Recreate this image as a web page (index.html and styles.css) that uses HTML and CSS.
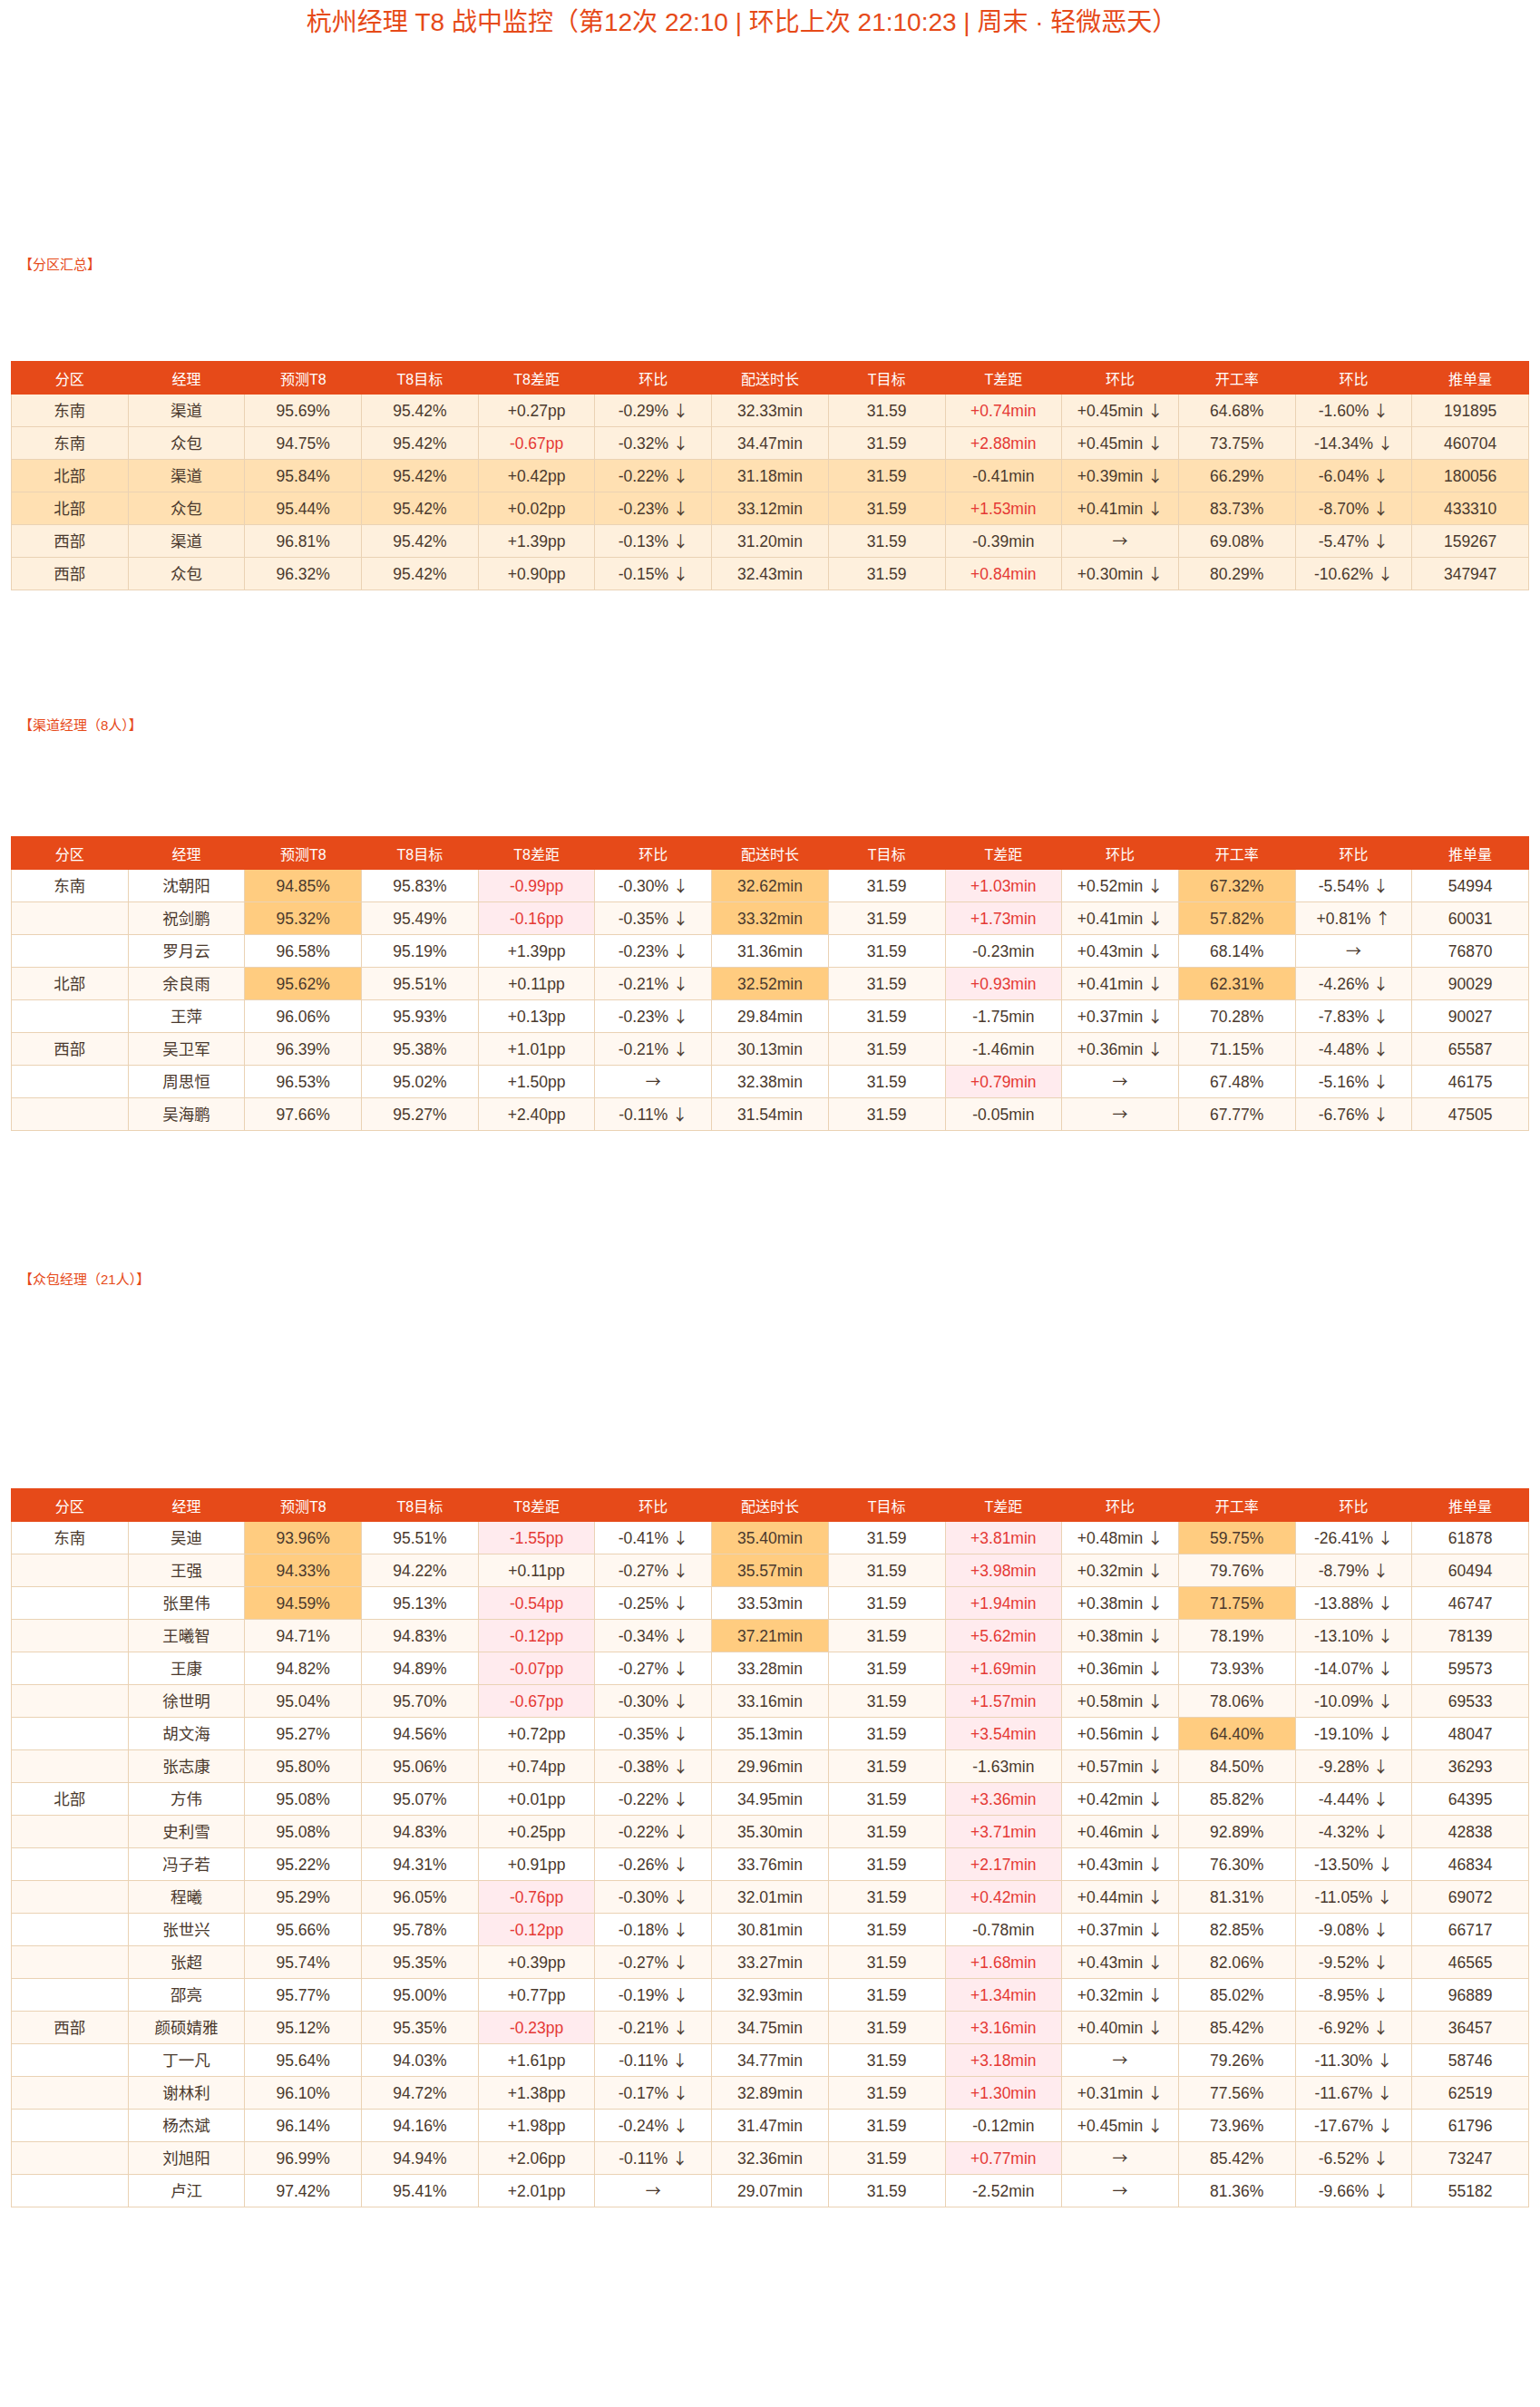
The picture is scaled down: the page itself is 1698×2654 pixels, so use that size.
FILE: index.html
```html
<!DOCTYPE html>
<html lang="zh-CN">
<head>
<meta charset="utf-8">
<title>杭州经理 T8 战中监控</title>
<link rel="stylesheet" href="styles.css">
</head>
<body>
<h1 class="title">杭州经理 T8 战中监控（第12次 22:10 | 环比上次 21:10:23 | 周末 · 轻微恶天）</h1>

<div class="label label-summary">【分区汇总】</div>
<table class="grid grid-summary">
<thead><tr><th>分区</th><th>经理</th><th>预测T8</th><th>T8目标</th><th>T8差距</th><th>环比</th><th>配送时长</th><th>T目标</th><th>T差距</th><th>环比</th><th>开工率</th><th>环比</th><th>推单量</th></tr></thead>
<tbody>
<tr class="r-base"><td>东南</td><td>渠道</td><td>95.69%</td><td>95.42%</td><td>+0.27pp</td><td>-0.29% <span class="arr">↓</span></td><td>32.33min</td><td>31.59</td><td class="red">+0.74min</td><td>+0.45min <span class="arr">↓</span></td><td>64.68%</td><td>-1.60% <span class="arr">↓</span></td><td>191895</td></tr>
<tr class="r-base"><td>东南</td><td>众包</td><td>94.75%</td><td>95.42%</td><td class="red">-0.67pp</td><td>-0.32% <span class="arr">↓</span></td><td>34.47min</td><td>31.59</td><td class="red">+2.88min</td><td>+0.45min <span class="arr">↓</span></td><td>73.75%</td><td>-14.34% <span class="arr">↓</span></td><td>460704</td></tr>
<tr class="r-north"><td>北部</td><td>渠道</td><td>95.84%</td><td>95.42%</td><td>+0.42pp</td><td>-0.22% <span class="arr">↓</span></td><td>31.18min</td><td>31.59</td><td>-0.41min</td><td>+0.39min <span class="arr">↓</span></td><td>66.29%</td><td>-6.04% <span class="arr">↓</span></td><td>180056</td></tr>
<tr class="r-north"><td>北部</td><td>众包</td><td>95.44%</td><td>95.42%</td><td>+0.02pp</td><td>-0.23% <span class="arr">↓</span></td><td>33.12min</td><td>31.59</td><td class="red">+1.53min</td><td>+0.41min <span class="arr">↓</span></td><td>83.73%</td><td>-8.70% <span class="arr">↓</span></td><td>433310</td></tr>
<tr class="r-base"><td>西部</td><td>渠道</td><td>96.81%</td><td>95.42%</td><td>+1.39pp</td><td>-0.13% <span class="arr">↓</span></td><td>31.20min</td><td>31.59</td><td>-0.39min</td><td><span class="arr">→</span></td><td>69.08%</td><td>-5.47% <span class="arr">↓</span></td><td>159267</td></tr>
<tr class="r-base"><td>西部</td><td>众包</td><td>96.32%</td><td>95.42%</td><td>+0.90pp</td><td>-0.15% <span class="arr">↓</span></td><td>32.43min</td><td>31.59</td><td class="red">+0.84min</td><td>+0.30min <span class="arr">↓</span></td><td>80.29%</td><td>-10.62% <span class="arr">↓</span></td><td>347947</td></tr>
</tbody>
</table>

<div class="label label-channel">【渠道经理（8人）】</div>
<table class="grid grid-people grid-channel">
<thead><tr><th>分区</th><th>经理</th><th>预测T8</th><th>T8目标</th><th>T8差距</th><th>环比</th><th>配送时长</th><th>T目标</th><th>T差距</th><th>环比</th><th>开工率</th><th>环比</th><th>推单量</th></tr></thead>
<tbody>
<tr><td>东南</td><td>沈朝阳</td><td class="hl">94.85%</td><td>95.83%</td><td class="neg">-0.99pp</td><td>-0.30% <span class="arr">↓</span></td><td class="hl">32.62min</td><td>31.59</td><td class="neg">+1.03min</td><td>+0.52min <span class="arr">↓</span></td><td class="hl">67.32%</td><td>-5.54% <span class="arr">↓</span></td><td>54994</td></tr>
<tr><td></td><td>祝剑鹏</td><td class="hl">95.32%</td><td>95.49%</td><td class="neg">-0.16pp</td><td>-0.35% <span class="arr">↓</span></td><td class="hl">33.32min</td><td>31.59</td><td class="neg">+1.73min</td><td>+0.41min <span class="arr">↓</span></td><td class="hl">57.82%</td><td>+0.81% <span class="arr">↑</span></td><td>60031</td></tr>
<tr><td></td><td>罗月云</td><td>96.58%</td><td>95.19%</td><td>+1.39pp</td><td>-0.23% <span class="arr">↓</span></td><td>31.36min</td><td>31.59</td><td>-0.23min</td><td>+0.43min <span class="arr">↓</span></td><td>68.14%</td><td><span class="arr">→</span></td><td>76870</td></tr>
<tr><td>北部</td><td>余良雨</td><td class="hl">95.62%</td><td>95.51%</td><td>+0.11pp</td><td>-0.21% <span class="arr">↓</span></td><td class="hl">32.52min</td><td>31.59</td><td class="neg">+0.93min</td><td>+0.41min <span class="arr">↓</span></td><td class="hl">62.31%</td><td>-4.26% <span class="arr">↓</span></td><td>90029</td></tr>
<tr><td></td><td>王萍</td><td>96.06%</td><td>95.93%</td><td>+0.13pp</td><td>-0.23% <span class="arr">↓</span></td><td>29.84min</td><td>31.59</td><td>-1.75min</td><td>+0.37min <span class="arr">↓</span></td><td>70.28%</td><td>-7.83% <span class="arr">↓</span></td><td>90027</td></tr>
<tr><td>西部</td><td>吴卫军</td><td>96.39%</td><td>95.38%</td><td>+1.01pp</td><td>-0.21% <span class="arr">↓</span></td><td>30.13min</td><td>31.59</td><td>-1.46min</td><td>+0.36min <span class="arr">↓</span></td><td>71.15%</td><td>-4.48% <span class="arr">↓</span></td><td>65587</td></tr>
<tr><td></td><td>周思恒</td><td>96.53%</td><td>95.02%</td><td>+1.50pp</td><td><span class="arr">→</span></td><td>32.38min</td><td>31.59</td><td class="neg">+0.79min</td><td><span class="arr">→</span></td><td>67.48%</td><td>-5.16% <span class="arr">↓</span></td><td>46175</td></tr>
<tr><td></td><td>吴海鹏</td><td>97.66%</td><td>95.27%</td><td>+2.40pp</td><td>-0.11% <span class="arr">↓</span></td><td>31.54min</td><td>31.59</td><td>-0.05min</td><td><span class="arr">→</span></td><td>67.77%</td><td>-6.76% <span class="arr">↓</span></td><td>47505</td></tr>
</tbody>
</table>

<div class="label label-crowd">【众包经理（21人）】</div>
<table class="grid grid-people grid-crowd">
<thead><tr><th>分区</th><th>经理</th><th>预测T8</th><th>T8目标</th><th>T8差距</th><th>环比</th><th>配送时长</th><th>T目标</th><th>T差距</th><th>环比</th><th>开工率</th><th>环比</th><th>推单量</th></tr></thead>
<tbody>
<tr><td>东南</td><td>吴迪</td><td class="hl">93.96%</td><td>95.51%</td><td class="neg">-1.55pp</td><td>-0.41% <span class="arr">↓</span></td><td class="hl">35.40min</td><td>31.59</td><td class="neg">+3.81min</td><td>+0.48min <span class="arr">↓</span></td><td class="hl">59.75%</td><td>-26.41% <span class="arr">↓</span></td><td>61878</td></tr>
<tr><td></td><td>王强</td><td class="hl">94.33%</td><td>94.22%</td><td>+0.11pp</td><td>-0.27% <span class="arr">↓</span></td><td class="hl">35.57min</td><td>31.59</td><td class="neg">+3.98min</td><td>+0.32min <span class="arr">↓</span></td><td>79.76%</td><td>-8.79% <span class="arr">↓</span></td><td>60494</td></tr>
<tr><td></td><td>张里伟</td><td class="hl">94.59%</td><td>95.13%</td><td class="neg">-0.54pp</td><td>-0.25% <span class="arr">↓</span></td><td>33.53min</td><td>31.59</td><td class="neg">+1.94min</td><td>+0.38min <span class="arr">↓</span></td><td class="hl">71.75%</td><td>-13.88% <span class="arr">↓</span></td><td>46747</td></tr>
<tr><td></td><td>王曦智</td><td>94.71%</td><td>94.83%</td><td class="neg">-0.12pp</td><td>-0.34% <span class="arr">↓</span></td><td class="hl">37.21min</td><td>31.59</td><td class="neg">+5.62min</td><td>+0.38min <span class="arr">↓</span></td><td>78.19%</td><td>-13.10% <span class="arr">↓</span></td><td>78139</td></tr>
<tr><td></td><td>王康</td><td>94.82%</td><td>94.89%</td><td class="neg">-0.07pp</td><td>-0.27% <span class="arr">↓</span></td><td>33.28min</td><td>31.59</td><td class="neg">+1.69min</td><td>+0.36min <span class="arr">↓</span></td><td>73.93%</td><td>-14.07% <span class="arr">↓</span></td><td>59573</td></tr>
<tr><td></td><td>徐世明</td><td>95.04%</td><td>95.70%</td><td class="neg">-0.67pp</td><td>-0.30% <span class="arr">↓</span></td><td>33.16min</td><td>31.59</td><td class="neg">+1.57min</td><td>+0.58min <span class="arr">↓</span></td><td>78.06%</td><td>-10.09% <span class="arr">↓</span></td><td>69533</td></tr>
<tr><td></td><td>胡文海</td><td>95.27%</td><td>94.56%</td><td>+0.72pp</td><td>-0.35% <span class="arr">↓</span></td><td>35.13min</td><td>31.59</td><td class="neg">+3.54min</td><td>+0.56min <span class="arr">↓</span></td><td class="hl">64.40%</td><td>-19.10% <span class="arr">↓</span></td><td>48047</td></tr>
<tr><td></td><td>张志康</td><td>95.80%</td><td>95.06%</td><td>+0.74pp</td><td>-0.38% <span class="arr">↓</span></td><td>29.96min</td><td>31.59</td><td>-1.63min</td><td>+0.57min <span class="arr">↓</span></td><td>84.50%</td><td>-9.28% <span class="arr">↓</span></td><td>36293</td></tr>
<tr><td>北部</td><td>方伟</td><td>95.08%</td><td>95.07%</td><td>+0.01pp</td><td>-0.22% <span class="arr">↓</span></td><td>34.95min</td><td>31.59</td><td class="neg">+3.36min</td><td>+0.42min <span class="arr">↓</span></td><td>85.82%</td><td>-4.44% <span class="arr">↓</span></td><td>64395</td></tr>
<tr><td></td><td>史利雪</td><td>95.08%</td><td>94.83%</td><td>+0.25pp</td><td>-0.22% <span class="arr">↓</span></td><td>35.30min</td><td>31.59</td><td class="neg">+3.71min</td><td>+0.46min <span class="arr">↓</span></td><td>92.89%</td><td>-4.32% <span class="arr">↓</span></td><td>42838</td></tr>
<tr><td></td><td>冯子若</td><td>95.22%</td><td>94.31%</td><td>+0.91pp</td><td>-0.26% <span class="arr">↓</span></td><td>33.76min</td><td>31.59</td><td class="neg">+2.17min</td><td>+0.43min <span class="arr">↓</span></td><td>76.30%</td><td>-13.50% <span class="arr">↓</span></td><td>46834</td></tr>
<tr><td></td><td>程曦</td><td>95.29%</td><td>96.05%</td><td class="neg">-0.76pp</td><td>-0.30% <span class="arr">↓</span></td><td>32.01min</td><td>31.59</td><td class="neg">+0.42min</td><td>+0.44min <span class="arr">↓</span></td><td>81.31%</td><td>-11.05% <span class="arr">↓</span></td><td>69072</td></tr>
<tr><td></td><td>张世兴</td><td>95.66%</td><td>95.78%</td><td class="neg">-0.12pp</td><td>-0.18% <span class="arr">↓</span></td><td>30.81min</td><td>31.59</td><td>-0.78min</td><td>+0.37min <span class="arr">↓</span></td><td>82.85%</td><td>-9.08% <span class="arr">↓</span></td><td>66717</td></tr>
<tr><td></td><td>张超</td><td>95.74%</td><td>95.35%</td><td>+0.39pp</td><td>-0.27% <span class="arr">↓</span></td><td>33.27min</td><td>31.59</td><td class="neg">+1.68min</td><td>+0.43min <span class="arr">↓</span></td><td>82.06%</td><td>-9.52% <span class="arr">↓</span></td><td>46565</td></tr>
<tr><td></td><td>邵亮</td><td>95.77%</td><td>95.00%</td><td>+0.77pp</td><td>-0.19% <span class="arr">↓</span></td><td>32.93min</td><td>31.59</td><td class="neg">+1.34min</td><td>+0.32min <span class="arr">↓</span></td><td>85.02%</td><td>-8.95% <span class="arr">↓</span></td><td>96889</td></tr>
<tr><td>西部</td><td>颜硕婧雅</td><td>95.12%</td><td>95.35%</td><td class="neg">-0.23pp</td><td>-0.21% <span class="arr">↓</span></td><td>34.75min</td><td>31.59</td><td class="neg">+3.16min</td><td>+0.40min <span class="arr">↓</span></td><td>85.42%</td><td>-6.92% <span class="arr">↓</span></td><td>36457</td></tr>
<tr><td></td><td>丁一凡</td><td>95.64%</td><td>94.03%</td><td>+1.61pp</td><td>-0.11% <span class="arr">↓</span></td><td>34.77min</td><td>31.59</td><td class="neg">+3.18min</td><td><span class="arr">→</span></td><td>79.26%</td><td>-11.30% <span class="arr">↓</span></td><td>58746</td></tr>
<tr><td></td><td>谢林利</td><td>96.10%</td><td>94.72%</td><td>+1.38pp</td><td>-0.17% <span class="arr">↓</span></td><td>32.89min</td><td>31.59</td><td class="neg">+1.30min</td><td>+0.31min <span class="arr">↓</span></td><td>77.56%</td><td>-11.67% <span class="arr">↓</span></td><td>62519</td></tr>
<tr><td></td><td>杨杰斌</td><td>96.14%</td><td>94.16%</td><td>+1.98pp</td><td>-0.24% <span class="arr">↓</span></td><td>31.47min</td><td>31.59</td><td>-0.12min</td><td>+0.45min <span class="arr">↓</span></td><td>73.96%</td><td>-17.67% <span class="arr">↓</span></td><td>61796</td></tr>
<tr><td></td><td>刘旭阳</td><td>96.99%</td><td>94.94%</td><td>+2.06pp</td><td>-0.11% <span class="arr">↓</span></td><td>32.36min</td><td>31.59</td><td class="neg">+0.77min</td><td><span class="arr">→</span></td><td>85.42%</td><td>-6.52% <span class="arr">↓</span></td><td>73247</td></tr>
<tr><td></td><td>卢江</td><td>97.42%</td><td>95.41%</td><td>+2.01pp</td><td><span class="arr">→</span></td><td>29.07min</td><td>31.59</td><td>-2.52min</td><td><span class="arr">→</span></td><td>81.36%</td><td>-9.66% <span class="arr">↓</span></td><td>55182</td></tr>
</tbody>
</table>
</body>
</html>
```

FILE: styles.css
```css
* {
  box-sizing: border-box;
}

body {
  margin: 0;
  padding: 0 12px 200px;
  background: #ffffff;
  color: #4a392d;
  font-family: "Liberation Sans", "Noto Sans CJK SC", sans-serif;
}

.title {
  margin: 0;
  height: 50px;
  line-height: 50px;
  padding-right: 62px;
  text-align: center;
  font-size: 28px;
  font-weight: 400;
  color: #e64a19;
}

.label {
  margin: 0;
  padding-left: 9px;
  font-size: 15px;
  line-height: 20px;
  color: #e64a19;
}

.label-summary {
  margin-top: 232px;
}

.label-channel {
  margin-top: 139px;
}

.label-crowd {
  margin-top: 154px;
}

.grid {
  width: 100%;
  border-collapse: collapse;
  table-layout: fixed;
  font-size: 17.5px;
}

.grid-summary {
  margin-top: 96px;
}

.grid-channel {
  margin-top: 112px;
}

.grid-crowd {
  margin-top: 220px;
}

.grid th {
  height: 36px;
  padding: 0;
  background: #e64a19;
  border: 1px solid #e64a19;
  color: #ffffff;
  font-size: 16px;
  font-weight: 400;
  text-align: center;
}

.grid td {
  height: 36px;
  padding: 0;
  border: 1px solid #ead2b4;
  text-align: center;
  white-space: nowrap;
  line-height: 20px;
}

.arr {
  font-family: "Noto Sans CJK SC", sans-serif;
  font-size: 17px;
  line-height: 0;
}

.r-base td {
  background: #fef0dd;
}

.r-north td {
  background: #ffe0b2;
}

.grid-people tbody tr:nth-child(odd) td {
  background: #ffffff;
}

.grid-people tbody tr:nth-child(even) td {
  background: #fff8f1;
}

.grid td.red {
  color: #e53935;
}

.grid-people tbody tr td.hl {
  background: #ffcc80;
}

.grid-people tbody tr td.neg {
  background: #ffebee;
  color: #e53935;
}
```
